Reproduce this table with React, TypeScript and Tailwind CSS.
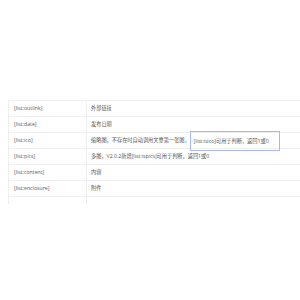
const rows: [string, React.ReactNode][] = [
  ["[list:outlink]", "外部链接"],
  ["[list:date]", "发布日期"],
  [
    "[list:ico]",
    <>
      缩略图，不存在时自动调用文章第一张图，
      <span className="inline-block border border-[#aab6f2] pl-[3px] pr-[10px] py-[6px] leading-[6px] -my-[7px]">
        [list:isico]可用于判断，返回1或0
      </span>
    </>,
  ],
  ["[list:pics]", "多图，V2.0.2新增[list:ispics]可用于判断，返回1或0"],
  ["[list:content]", "内容"],
  ["[list:enclosure]", "附件"],
];

export default function App() {
  return (
    <div
      className="w-[300px] h-[300px] overflow-hidden bg-white pt-[100px] pl-[8px]"
      style={{ fontFamily: '"Open Sans", "Noto Sans CJK SC", sans-serif' }}
    >
      <div className="w-[400px] border-t border-l border-[#eeeeee]">
        {rows.map(([tag, desc]) => (
          <div key={tag} className="flex h-[16px] border-b border-[#eeeeee] text-[5.2px]">
            <div className="w-[78px] shrink-0 flex items-center pl-[5px] border-r border-[#eeeeee] text-[#555b66]">
              {tag}
            </div>
            <div className="flex-1 flex items-center pl-[4px] text-[#555555] whitespace-nowrap">
              {desc}
            </div>
          </div>
        ))}
        <div className="flex h-[7px]">
          <div className="w-[78px] shrink-0 border-r border-[#eeeeee]" />
        </div>
      </div>
    </div>
  );
}
